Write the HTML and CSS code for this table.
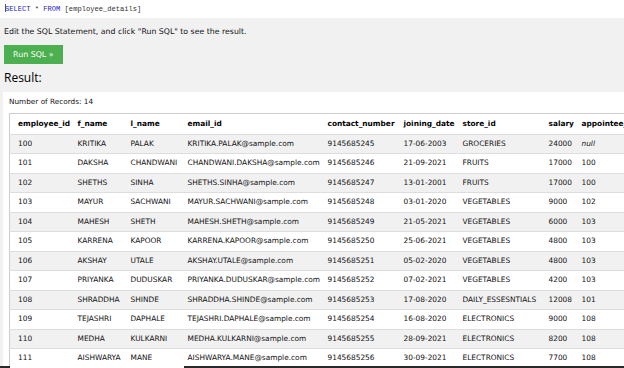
FILE: index.html
```html
<!DOCTYPE html>
<html>

<head>
    <title>SQL Tryit</title>
    <link rel="stylesheet" href="styles.css">
</head>

<body>
    <div class="code-bar"><span class="cursor"></span><span class="kw">SELECT</span> * <span class="kw">FROM</span> [employee_details]</div>

    <div class="controls">
        <p class="hint">Edit the SQL Statement, and click "Run SQL" to see the result.</p>
        <button class="run-btn">Run SQL &raquo;</button>
        <h2 class="result-title">Result:</h2>
    </div>

    <div class="result-panel">
        <div class="record-count">Number of Records: 14</div>
        <table class="result-table">
            <colgroup>
                <col class="c-id">
                <col class="c-fname">
                <col class="c-lname">
                <col class="c-email">
                <col class="c-contact">
                <col class="c-date">
                <col class="c-store">
                <col class="c-salary">
                <col class="c-appointee">
            </colgroup>
            <tr>
                <th>employee_id</th><th>f_name</th><th>l_name</th><th>email_id</th><th>contact_number</th><th>joining_date</th><th>store_id</th><th>salary</th><th>appointee_</th>
            </tr>
            <tr>
                <td>100</td><td>KRITIKA</td><td>PALAK</td><td>KRITIKA.PALAK@sample.com</td><td>9145685245</td><td>17-06-2003</td><td>GROCERIES</td><td>24000</td><td><i>null</i></td>
            </tr>
            <tr>
                <td>101</td><td>DAKSHA</td><td>CHANDWANI</td><td>CHANDWANI.DAKSHA@sample.com</td><td>9145685246</td><td>21-09-2021</td><td>FRUITS</td><td>17000</td><td>100</td>
            </tr>
            <tr>
                <td>102</td><td>SHETHS</td><td>SINHA</td><td>SHETHS.SINHA@sample.com</td><td>9145685247</td><td>13-01-2001</td><td>FRUITS</td><td>17000</td><td>100</td>
            </tr>
            <tr>
                <td>103</td><td>MAYUR</td><td>SACHWANI</td><td>MAYUR.SACHWANI@sample.com</td><td>9145685248</td><td>03-01-2020</td><td>VEGETABLES</td><td>9000</td><td>102</td>
            </tr>
            <tr>
                <td>104</td><td>MAHESH</td><td>SHETH</td><td>MAHESH.SHETH@sample.com</td><td>9145685249</td><td>21-05-2021</td><td>VEGETABLES</td><td>6000</td><td>103</td>
            </tr>
            <tr>
                <td>105</td><td>KARRENA</td><td>KAPOOR</td><td>KARRENA.KAPOOR@sample.com</td><td>9145685250</td><td>25-06-2021</td><td>VEGETABLES</td><td>4800</td><td>103</td>
            </tr>
            <tr>
                <td>106</td><td>AKSHAY</td><td>UTALE</td><td>AKSHAY.UTALE@sample.com</td><td>9145685251</td><td>05-02-2020</td><td>VEGETABLES</td><td>4800</td><td>103</td>
            </tr>
            <tr>
                <td>107</td><td>PRIYANKA</td><td>DUDUSKAR</td><td>PRIYANKA.DUDUSKAR@sample.com</td><td>9145685252</td><td>07-02-2021</td><td>VEGETABLES</td><td>4200</td><td>103</td>
            </tr>
            <tr>
                <td>108</td><td>SHRADDHA</td><td>SHINDE</td><td>SHRADDHA.SHINDE@sample.com</td><td>9145685253</td><td>17-08-2020</td><td>DAILY_ESSESNTIALS</td><td>12008</td><td>101</td>
            </tr>
            <tr>
                <td>109</td><td>TEJASHRI</td><td>DAPHALE</td><td>TEJASHRI.DAPHALE@sample.com</td><td>9145685254</td><td>16-08-2020</td><td>ELECTRONICS</td><td>9000</td><td>108</td>
            </tr>
            <tr>
                <td>110</td><td>MEDHA</td><td>KULKARNI</td><td>MEDHA.KULKARNI@sample.com</td><td>9145685255</td><td>28-09-2021</td><td>ELECTRONICS</td><td>8200</td><td>108</td>
            </tr>
            <tr>
                <td>111</td><td>AISHWARYA</td><td>MANE</td><td>AISHWARYA.MANE@sample.com</td><td>9145685256</td><td>30-09-2021</td><td>ELECTRONICS</td><td>7700</td><td>108</td>
            </tr>
        </table>
    </div>

    <div class="edge-strip"></div>
</body>

</html>
```

FILE: styles.css
```css
body {
    margin: 0;
    background-color: #f1f1f1;
    font-family: "DejaVu Sans", Verdana, sans-serif;
    color: #111;
    overflow: hidden;
}

.code-bar {
    background-color: white;
    height: 18px;
    line-height: 19px;
    padding-left: 5px;
    font-family: "Liberation Mono", monospace;
    font-size: 7.1px;
    color: #333;
    white-space: nowrap;
}

.cursor {
    display: inline-block;
    width: 1px;
    height: 8px;
    margin-right: -1px;
    vertical-align: -1px;
    background-color: #4a5a8a;
}

.kw {
    color: #2424c8;
}

.controls {
    padding: 0 4px 6px;
}

.hint {
    margin: 9px 0 0;
    font-size: 7.8px;
    line-height: 10px;
    color: #111;
}

.run-btn {
    display: block;
    margin-top: 8px;
    height: 19px;
    padding: 0 9px;
    border: none;
    background-color: #4caf50;
    color: white;
    font-family: "DejaVu Sans", Verdana, sans-serif;
    font-size: 7.9px;
    cursor: pointer;
}

.result-title {
    margin: 6px 0 0;
    font-family: "Open Sans", sans-serif;
    font-weight: 400;
    font-size: 12px;
    line-height: 16px;
    color: #000;
}

.result-panel {
    background-color: white;
    margin-left: 3px;
    padding: 5px 0 0 6px;
}

.record-count {
    font-size: 7.3px;
    line-height: 10px;
    margin-bottom: 6px;
}

.result-table {
    border-collapse: collapse;
    border: 1px solid #ccc;
    table-layout: fixed;
    width: 654px;
    font-size: 7.4px;
    white-space: nowrap;
}

.c-id { width: 60px; }
.c-fname { width: 53px; }
.c-lname { width: 57px; }
.c-email { width: 140px; }
.c-contact { width: 76px; }
.c-date { width: 59px; }
.c-store { width: 86px; }
.c-salary { width: 33px; }
.c-appointee { width: 90px; }

.result-table tr {
    border-bottom: 1px solid #ddd;
}

.result-table tr:nth-child(even) {
    background-color: #f1f1f1;
}

.result-table th,
.result-table td {
    padding: 5px 0 5px 8px;
    line-height: 8.5px;
    text-align: left;
    overflow: hidden;
}

.result-table th {
    padding-top: 5.5px;
    padding-bottom: 5.5px;
    font-weight: bold;
    color: #000;
}

.edge-strip {
    position: fixed;
    left: 0;
    right: 0;
    bottom: 0;
    height: 2px;
    background: linear-gradient(to right, #2a2a2a 10px, transparent 10px, transparent 184px, #2a2a2a 184px);
}
```
